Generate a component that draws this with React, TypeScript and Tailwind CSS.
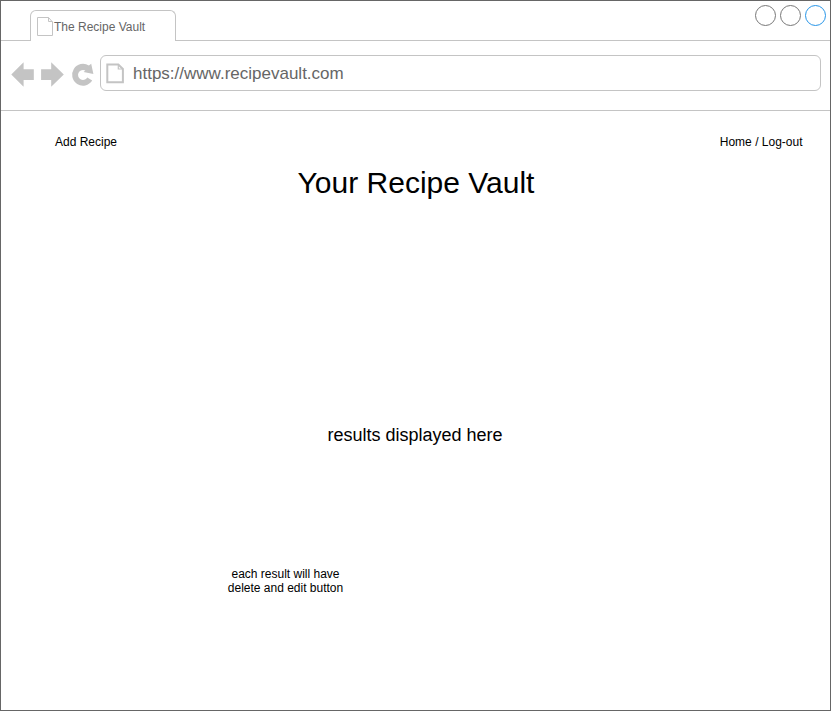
function NavIcons() {
  return (
    <svg className="block shrink-0" width="99" height="69" viewBox="1 41 99 69" fill="#c4c4c4">
      <path d="M11.3 74.5 L23.6 62.2 V69.2 H33.8 V79.9 H23.6 V86.8 Z" />
      <path d="M63.8 74.5 L51.2 62.2 V69.2 H41.1 V79.9 H51.2 V86.8 Z" />
      <path d="M88.9 65.6 L91.2 63.8 L93.4 74 L83.6 72 L85.4 70.6 A5 5 0 1 0 87.3 77.6 L92.2 80.6 A10.9 10.9 0 1 1 88.9 65.6 Z" />
    </svg>
  );
}

export default function App() {
  return (
    <div className="flex h-[711px] w-[831px] flex-col border border-[#666] bg-white font-['Liberation_Sans',Arial,sans-serif] text-xs leading-[14px] text-black">
      <header className="flex h-10 shrink-0">
        <div className="w-[29px] border-b border-[#c4c4c4]" />
        <div className="mt-[9px] flex w-[146px] rounded-t-[6px] border border-b-0 border-[#c4c4c4] pl-[6px] text-[#666]">
          <svg className="mt-[6px] block shrink-0" width="17" height="20" viewBox="0 0 17 20" fill="none" stroke="#c4c4c4">
            <path d="M0.5 0.5 H11.5 L15.5 5 V18.5 H0.5 Z M11.5 0.5 V4.5 H15.5" />
          </svg>
          <span className="mt-[9px] whitespace-nowrap">The Recipe Vault</span>
        </div>
        <div className="flex flex-1 justify-end gap-1 border-b border-[#c4c4c4] pr-[4px] pt-[4px]">
          <span className="size-[21px] rounded-full border border-[#777]" />
          <span className="size-[21px] rounded-full border border-[#777]" />
          <span className="size-[21px] rounded-full border border-[#2695e8]" />
        </div>
      </header>
      <nav className="flex h-[70px] shrink-0 border-b border-[#c4c4c4]">
        <NavIcons />
        <div className="mt-[14px] flex h-9 w-[721px] items-start rounded-[6px] border border-[#c4c4c4] pl-[5px] text-[#666]">
          <svg className="mt-[7px] block shrink-0" width="19" height="21" viewBox="0 0 19 21" fill="none" stroke="#c4c4c4" strokeWidth="2">
            <path d="M1.3 1.5 H12.3 L16.9 6 V19.3 H1.3 Z" />
            <path d="M12.3 1.5 V6 H16.9" strokeWidth="1.2" />
          </svg>
          <span className="ml-2 mt-2 text-[17px] leading-5">https://www.recipevault.com</span>
        </div>
      </nav>
      <main className="flex flex-1 flex-col">
        <div className="flex justify-between pl-[54px] pr-[27.5px] pt-6">
          <span>Add Recipe</span>
          <span>Home / Log-out</span>
        </div>
        <h1 className="mt-4 pl-px text-center text-[30px] leading-9">Your Recipe Vault</h1>
        <p className="mt-[223px] pr-px text-center text-[18px] leading-[22px]">results displayed here</p>
        <p className="ml-[224px] mt-[121px] w-[121px] text-center">
          each result will have
          <br />
          delete and edit button
        </p>
      </main>
    </div>
  );
}
